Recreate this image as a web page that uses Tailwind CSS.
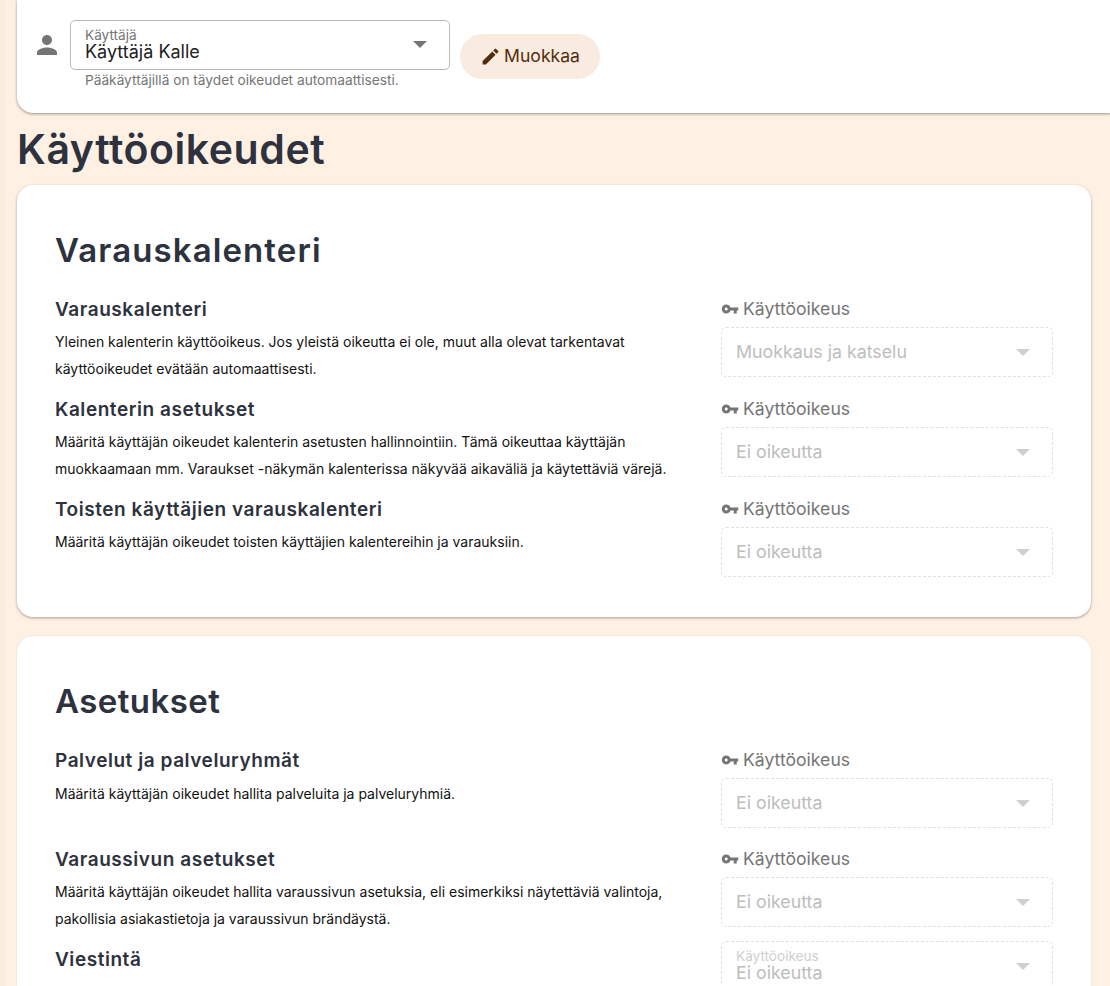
<!DOCTYPE html>
<html lang="fi">
<head>
  <meta charset="UTF-8"/>
  <title>Käyttöoikeudet</title>
  <script src="https://cdn.jsdelivr.net/npm/@tailwindcss/browser@4"></script>
</head>
<body class="bg-[#fff0e4] font-['Inter',sans-serif] h-[986px] w-[1110px] overflow-hidden">
  <div class="h-full pl-[12px] border-l-[5px] border-[#f7ece1] box-border">

    <!-- User bar -->
    <div class="h-[113px] bg-white rounded-bl-2xl shadow-[0_1px_3px_rgba(0,0,0,0.4)] pl-[15px] flex items-start -mr-px">
      <svg class="w-[30px] h-[30px] mt-[30px] fill-[#757575]" viewBox="0 0 24 24"><path d="M12 12c2.21 0 4-1.79 4-4s-1.79-4-4-4-4 1.79-4 4 1.79 4 4 4zm0 2c-2.67 0-8 1.34-8 4v2h16v-2c0-2.66-5.33-4-8-4z"/></svg>
      <div class="ml-[8px] mt-[20px] w-[380px]">
        <div class="h-[50px] border border-[#b9b9b9] rounded-[5px] pl-[14px] pr-[22px] flex items-center justify-between">
          <div class="pt-[1px]">
            <div class="text-[13.6px] leading-[13px] text-[#757575]">Käyttäjä</div>
            <div class="text-[18px] leading-[20px] text-[#222]">Käyttäjä Kalle</div>
          </div>
          <div class="w-0 h-0 border-x-[7px] border-x-transparent border-t-[7px] border-t-[#757575] -mt-[2px]"></div>
        </div>
        <p class="text-[13.7px] leading-[18px] text-[#757575] pl-[15px] mt-[1px]">Pääkäyttäjillä on täydet oikeudet automaattisesti.</p>
      </div>
      <button class="ml-[10px] mt-[34px] h-[45px] w-[140px] rounded-full bg-[#f9ebdf] text-[#552c0b] text-[17.6px] flex items-center justify-center gap-[3px]">
        <svg class="w-[21px] h-[21px] fill-[#552c0b]" viewBox="0 0 24 24"><path d="M3 17.25V21h3.75L17.81 9.94l-3.75-3.75L3 17.25zM20.71 7.04a1 1 0 0 0 0-1.41l-2.34-2.34a1 1 0 0 0-1.41 0l-1.83 1.83 3.75 3.75 1.83-1.83z"/></svg>
        Muokkaa
      </button>
    </div>

    <h1 class="pt-[1px] font-semibold text-[41px] leading-[71px] text-[#2d323e] tracking-[0.55px]">Käyttöoikeudet</h1>

    <!-- Varauskalenteri -->
    <section class="w-[1074px] h-[432px] bg-white rounded-2xl shadow-[0_1px_3px_rgba(0,0,0,0.35)] px-[38px] pt-[44px]">
      <h2 class="font-semibold text-[33px] leading-[42px] text-[#2d323e] tracking-[1.1px]">Varauskalenteri</h2>
      <div class="mt-[26px] flex justify-between h-[100px]">
        <div class="w-[640px] pt-[1px]">
          <h3 class="font-semibold text-[19px] leading-[24px] text-[#2d323e] tracking-[0.55px]">Varauskalenteri</h3>
          <p class="mt-[6px] text-[14px] leading-[27px] text-[#111]">Yleinen kalenterin käyttöoikeus. Jos yleistä oikeutta ei ole, muut alla olevat tarkentavat<br/>käyttöoikeudet evätään automaattisesti.</p>
        </div>
        <div class="w-[332px]">
          <div class="flex items-center gap-[4px] h-[24px] text-[#757575] text-[17.6px]">
            <svg class="w-[18px] h-[18px] fill-[#757575]" viewBox="0 0 24 24"><path d="M12.65 10C11.83 7.67 9.61 6 7 6c-3.31 0-6 2.69-6 6s2.69 6 6 6c2.61 0 4.83-1.67 5.65-4H17v4h4v-4h2v-4H12.65zM7 14c-1.1 0-2-.9-2-2s.9-2 2-2 2 .9 2 2-.9 2-2 2z"/></svg>
            Käyttöoikeus
          </div>
          <div class="mt-[6px] h-[50px] border border-dashed border-[#e0e0e0] rounded-[5px] pl-[14px] pr-[22px] pt-[1px] flex items-center justify-between text-[#bdbdbd] text-[17.8px]">
            Muokkaus ja katselu
            <div class="w-0 h-0 border-x-[7px] border-x-transparent border-t-[7px] border-t-[#cfcfcf]"></div>
          </div>
        </div>
      </div>
      <div class="flex justify-between h-[100px]">
        <div class="w-[640px] pt-[1px]">
          <h3 class="font-semibold text-[19px] leading-[24px] text-[#2d323e] tracking-[0.55px]">Kalenterin asetukset</h3>
          <p class="mt-[6px] text-[14px] leading-[27px] text-[#111]">Määritä käyttäjän oikeudet kalenterin asetusten hallinnointiin. Tämä oikeuttaa käyttäjän<br/>muokkaamaan mm. Varaukset -näkymän kalenterissa näkyvää aikaväliä ja käytettäviä värejä.</p>
        </div>
        <div class="w-[332px]">
          <div class="flex items-center gap-[4px] h-[24px] text-[#757575] text-[17.6px]">
            <svg class="w-[18px] h-[18px] fill-[#757575]" viewBox="0 0 24 24"><path d="M12.65 10C11.83 7.67 9.61 6 7 6c-3.31 0-6 2.69-6 6s2.69 6 6 6c2.61 0 4.83-1.67 5.65-4H17v4h4v-4h2v-4H12.65zM7 14c-1.1 0-2-.9-2-2s.9-2 2-2 2 .9 2 2-.9 2-2 2z"/></svg>
            Käyttöoikeus
          </div>
          <div class="mt-[6px] h-[50px] border border-dashed border-[#e0e0e0] rounded-[5px] pl-[14px] pr-[22px] pt-[1px] flex items-center justify-between text-[#bdbdbd] text-[17.8px]">
            Ei oikeutta
            <div class="w-0 h-0 border-x-[7px] border-x-transparent border-t-[7px] border-t-[#cfcfcf]"></div>
          </div>
        </div>
      </div>
      <div class="flex justify-between h-[100px]">
        <div class="w-[640px] pt-[1px]">
          <h3 class="font-semibold text-[19px] leading-[24px] text-[#2d323e] tracking-[0.55px]">Toisten käyttäjien varauskalenteri</h3>
          <p class="mt-[6px] text-[14px] leading-[27px] text-[#111]">Määritä käyttäjän oikeudet toisten käyttäjien kalentereihin ja varauksiin.</p>
        </div>
        <div class="w-[332px]">
          <div class="flex items-center gap-[4px] h-[24px] text-[#757575] text-[17.6px]">
            <svg class="w-[18px] h-[18px] fill-[#757575]" viewBox="0 0 24 24"><path d="M12.65 10C11.83 7.67 9.61 6 7 6c-3.31 0-6 2.69-6 6s2.69 6 6 6c2.61 0 4.83-1.67 5.65-4H17v4h4v-4h2v-4H12.65zM7 14c-1.1 0-2-.9-2-2s.9-2 2-2 2 .9 2 2-.9 2-2 2z"/></svg>
            Käyttöoikeus
          </div>
          <div class="mt-[6px] h-[50px] border border-dashed border-[#e0e0e0] rounded-[5px] pl-[14px] pr-[22px] pt-[1px] flex items-center justify-between text-[#bdbdbd] text-[17.8px]">
            Ei oikeutta
            <div class="w-0 h-0 border-x-[7px] border-x-transparent border-t-[7px] border-t-[#cfcfcf]"></div>
          </div>
        </div>
      </div>
    </section>

    <!-- Asetukset -->
    <section class="mt-[19px] w-[1074px] h-[350px] overflow-hidden bg-white rounded-t-2xl shadow-[0_0_2px_rgba(0,0,0,0.12)] px-[38px] pt-[44px]">
      <h2 class="font-semibold text-[33px] leading-[42px] text-[#2d323e] tracking-[0.45px]">Asetukset</h2>
      <div class="mt-[26px] flex justify-between h-[99px]">
        <div class="w-[640px] pt-[1px]">
          <h3 class="font-semibold text-[19px] leading-[24px] text-[#2d323e] tracking-[0.55px]">Palvelut ja palveluryhmät</h3>
          <p class="mt-[7px] text-[14px] leading-[27px] text-[#111]">Määritä käyttäjän oikeudet hallita palveluita ja palveluryhmiä.</p>
        </div>
        <div class="w-[332px]">
          <div class="flex items-center gap-[4px] h-[24px] text-[#757575] text-[17.6px]">
            <svg class="w-[18px] h-[18px] fill-[#757575]" viewBox="0 0 24 24"><path d="M12.65 10C11.83 7.67 9.61 6 7 6c-3.31 0-6 2.69-6 6s2.69 6 6 6c2.61 0 4.83-1.67 5.65-4H17v4h4v-4h2v-4H12.65zM7 14c-1.1 0-2-.9-2-2s.9-2 2-2 2 .9 2 2-.9 2-2 2z"/></svg>
            Käyttöoikeus
          </div>
          <div class="mt-[6px] h-[50px] border border-dashed border-[#e0e0e0] rounded-[5px] pl-[14px] pr-[22px] pt-[1px] flex items-center justify-between text-[#bdbdbd] text-[17.8px]">
            Ei oikeutta
            <div class="w-0 h-0 border-x-[7px] border-x-transparent border-t-[7px] border-t-[#cfcfcf]"></div>
          </div>
        </div>
      </div>
      <div class="flex justify-between h-[94px]">
        <div class="w-[640px] pt-[1px]">
          <h3 class="font-semibold text-[19px] leading-[24px] text-[#2d323e] tracking-[0.55px]">Varaussivun asetukset</h3>
          <p class="mt-[6px] text-[14px] leading-[27px] text-[#111]">Määritä käyttäjän oikeudet hallita varaussivun asetuksia, eli esimerkiksi näytettäviä valintoja,<br/>pakollisia asiakastietoja ja varaussivun brändäystä.</p>
        </div>
        <div class="w-[332px]">
          <div class="flex items-center gap-[4px] h-[24px] text-[#757575] text-[17.6px]">
            <svg class="w-[18px] h-[18px] fill-[#757575]" viewBox="0 0 24 24"><path d="M12.65 10C11.83 7.67 9.61 6 7 6c-3.31 0-6 2.69-6 6s2.69 6 6 6c2.61 0 4.83-1.67 5.65-4H17v4h4v-4h2v-4H12.65zM7 14c-1.1 0-2-.9-2-2s.9-2 2-2 2 .9 2 2-.9 2-2 2z"/></svg>
            Käyttöoikeus
          </div>
          <div class="mt-[6px] h-[50px] border border-dashed border-[#e0e0e0] rounded-[5px] pl-[14px] pr-[22px] pt-[1px] flex items-center justify-between text-[#bdbdbd] text-[17.8px]">
            Ei oikeutta
            <div class="w-0 h-0 border-x-[7px] border-x-transparent border-t-[7px] border-t-[#cfcfcf]"></div>
          </div>
        </div>
      </div>
      <div class="flex justify-between">
        <div class="w-[640px]">
          <h3 class="mt-[7px] font-semibold text-[19px] leading-[24px] text-[#2d323e] tracking-[0.55px]">Viestintä</h3>
        </div>
        <div class="w-[332px]">
          <div class="h-[50px] border border-dashed border-[#e0e0e0] rounded-[5px] pl-[14px] pr-[22px] flex items-center justify-between">
            <div class="pt-[1px]">
              <div class="text-[13.6px] leading-[13px] text-[#cfcfcf]">Käyttöoikeus</div>
              <div class="text-[17.8px] leading-[20px] text-[#bdbdbd]">Ei oikeutta</div>
            </div>
            <div class="w-0 h-0 border-x-[7px] border-x-transparent border-t-[7px] border-t-[#cfcfcf]"></div>
          </div>
        </div>
      </div>
    </section>
  </div>
</body>
</html>
